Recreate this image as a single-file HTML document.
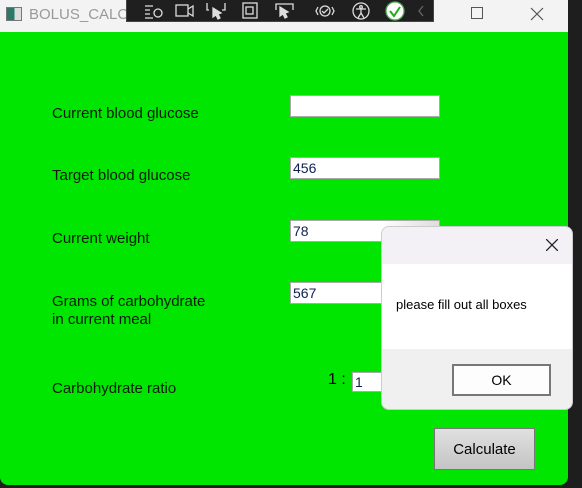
<!DOCTYPE html>
<html><head><style>
*{margin:0;padding:0;box-sizing:border-box}
body{width:582px;height:488px;background:#1e1e1e;position:relative;overflow:hidden;font-family:"Liberation Sans",sans-serif;font-size:14px;color:#000}
.win{position:absolute;left:0;top:0;width:568px;height:485px;background:#00e600;border-radius:0 0 8px 8px;overflow:hidden}
.title{position:absolute;left:0;top:0;width:568px;height:32px;background:#f3f3f3}
.lbl{position:absolute;left:52px;font-size:15px;line-height:18px;color:#0a1a0a}
.in{position:absolute;left:290px;width:150px;height:22px;background:#fff;border:1px solid #aaa;font-size:14px;line-height:20px;padding-left:2px;color:#102050}
.tb{position:absolute;left:126px;top:0;width:308px;height:22px;background:#1f1f1f;border:1px solid #444;border-top:none}
.tb svg{position:absolute;top:0}
</style></head><body>
<div class="win">
<div class="title">
<div style="position:absolute;left:6px;top:7px;width:16px;height:14px;border:1px solid #777;background:linear-gradient(90deg,#2a7a6a 55%,#ddd 55%)"></div>
<div style="position:absolute;left:29px;top:6px;font-size:15px;color:#999">BOLUS_CALCU</div>
<div style="position:absolute;left:471px;top:7px;width:12px;height:12px;border:1px solid #555"></div>
<svg style="position:absolute;left:530px;top:7px" width="14" height="14"><path d="M1 1L13 13M13 1L1 13" stroke="#555" stroke-width="1.2"/></svg>
</div>
<div class="lbl" style="top:105px">Current blood glucose</div>
<div class="lbl" style="top:167px">Target blood glucose</div>
<div class="lbl" style="top:230px">Current weight</div>
<div class="lbl" style="top:293px">Grams of carbohydrate<br>in current meal</div>
<div class="lbl" style="top:380px">Carbohydrate ratio</div>
<div class="in" style="top:95px"></div>
<div class="in" style="top:157px">456</div>
<div class="in" style="top:220px;background:linear-gradient(90deg,#fff 60%,#ddd)">78</div>
<div class="in" style="top:282px">567</div>
<div style="position:absolute;left:328px;top:371px;font-size:16px">1 :</div>
<div class="in" style="left:352px;top:372px;width:40px;height:20px;line-height:18px">1</div>
<div style="position:absolute;left:434px;top:428px;width:101px;height:42px;background:linear-gradient(#e0e0e0,#c4c4c4);border:1px solid #777;text-align:center;line-height:42px;font-size:15px">Calculate</div>
</div>
<div class="tb">
<svg width="308" height="22" fill="none" stroke="#ddd" stroke-width="1.3">
<path d="M18 6h8M18 10h5M18 14h5M18 18h8"/><circle cx="31" cy="13" r="4"/>
<rect x="49" y="5" width="12" height="11"/><path d="M61 9l5-3v10l-5-3"/>
<path d="M80 3v7h2M98 3v7h-3"/><path d="M86 8l8 5-3 1 2 4-2 1-2-4-3 2z" fill="#ddd"/>
<rect x="116" y="3" width="14" height="15"/><rect x="119" y="7" width="7" height="7"/>
<path d="M149 10V4h17v6"/><path d="M153 7l8 5-3 1 2 4-2 1-2-4-3 2z" fill="#ddd"/>
<path d="M191 7l-2 4 2 4M205 7l2 4-2 4"/><circle cx="198" cy="11" r="5"/><path d="M195 11l2 2 4-4"/>
<circle cx="234" cy="11" r="8"/><circle cx="234" cy="7" r="1.3"/><path d="M229 9h10M234 9v4l-3 5M234 13l3 5"/>
<circle cx="268" cy="11" r="9" stroke="#5a5" fill="#fff"/><path d="M263 11l4 5 6-9" stroke="#2a2" stroke-width="2"/>
<path d="M296 6l-4 5 4 5" stroke="#666"/>
</svg>
</div>
<div style="position:absolute;left:381px;top:226px;width:192px;height:184px;border-radius:8px;overflow:hidden;border:1px solid #ccc;background:#f0f0f0">
<div style="height:37px;background:#f3f1f5;position:relative"><svg style="position:absolute;left:164px;top:12px" width="12" height="12"><path d="M0 0L12 12M12 0L0 12" stroke="#222" stroke-width="1.3"/></svg></div>
<div style="height:85px;background:#fff;padding:33px 0 0 14px;font-size:13px">please fill out all boxes</div>
<div style="position:absolute;left:70px;top:137px;width:99px;height:32px;border:2px solid #777;background:#fdfdfd;text-align:center;line-height:28px;font-size:14px">OK</div>
</div>
</body></html>
